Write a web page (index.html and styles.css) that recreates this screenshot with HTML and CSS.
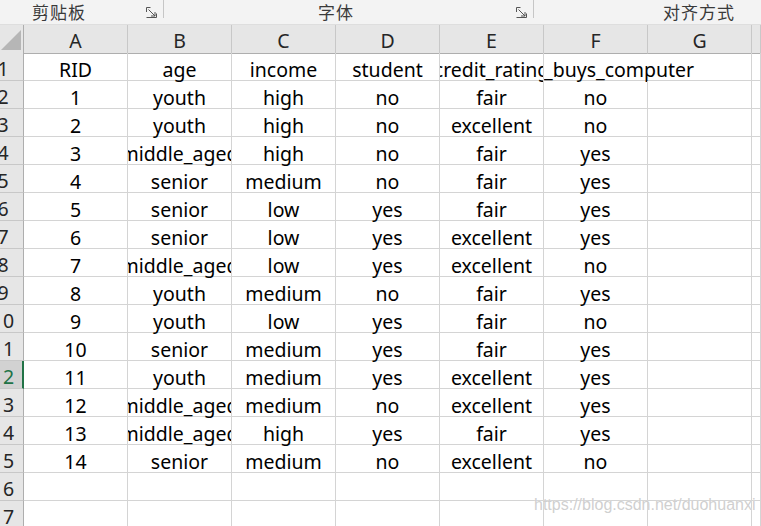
FILE: index.html
```html
<!DOCTYPE html>
<html>
<head>
<meta charset="utf-8">
<link rel="stylesheet" href="styles.css">
</head>
<body>
<div class="app">
  <div class="ribbon">
    <div class="group g1"><span class="glabel">剪贴板</span><svg class="launcher" viewBox="0 0 11 11"><path d="M0.5 5V0.5H4.5M0.5 10.5H10.5V6.5M2.5 2.5L9 9M9 5V9H5" fill="none" stroke="#555" stroke-width="1"/></svg></div>
    <div class="group g2"><span class="glabel">字体</span><svg class="launcher" viewBox="0 0 11 11"><path d="M0.5 5V0.5H4.5M0.5 10.5H10.5V6.5M2.5 2.5L9 9M9 5V9H5" fill="none" stroke="#555" stroke-width="1"/></svg></div>
    <div class="group g3"><span class="glabel">对齐方式</span></div>
  </div>
  <div class="sheet" id="sheet">
    <div class="corner"><div class="tri"></div></div>
    <div class="colhead">A</div><div class="colhead">B</div><div class="colhead">C</div><div class="colhead">D</div><div class="colhead">E</div><div class="colhead">F</div><div class="colhead">G</div><div class="colhead last"></div>
  </div>
  <div class="watermark">https://blog.csdn.net/duohuanxi</div>
</div>
<script src="app.js"></script>
</body>
</html>
```
FILE: app.js
```js
const rows = [
  ["RID","age","income","student","credit_rating","buys_computer"],
  ["1","youth","high","no","fair","no"],
  ["2","youth","high","no","excellent","no"],
  ["3","middle_aged","high","no","fair","yes"],
  ["4","senior","medium","no","fair","yes"],
  ["5","senior","low","yes","fair","yes"],
  ["6","senior","low","yes","excellent","yes"],
  ["7","middle_aged","low","yes","excellent","no"],
  ["8","youth","medium","no","fair","yes"],
  ["9","youth","low","yes","fair","no"],
  ["10","senior","medium","yes","fair","yes"],
  ["11","youth","medium","yes","excellent","yes"],
  ["12","middle_aged","medium","no","excellent","yes"],
  ["13","middle_aged","high","yes","fair","yes"],
  ["14","senior","medium","no","excellent","no"],
  [],[]
];
const sheet = document.getElementById("sheet");
rows.forEach((r, i) => {
  const n = i + 1;
  const rh = document.createElement("div");
  rh.className = "rowhead" + (n === 12 ? " active" : "");
  rh.innerHTML = '<span class="num">' + n + '</span>';
  sheet.appendChild(rh);
  if (i === 0) {
    for (let c = 0; c < 5; c++) {
      const d = document.createElement("div");
      d.className = "cell";
      d.innerHTML = '<span>' + r[c] + '</span>';
      sheet.appendChild(d);
    }
    const f = document.createElement("div");
    f.className = "cell span2";
    f.innerHTML = '<span>_' + r[5] + '</span>';
    sheet.appendChild(f);
  } else {
    for (let c = 0; c < 7; c++) {
      const d = document.createElement("div");
      d.className = "cell";
      d.innerHTML = '<span>' + (r[c] || "") + '</span>';
      sheet.appendChild(d);
    }
  }
  const e = document.createElement("div");
  e.className = "cell last";
  sheet.appendChild(e);
});
```
FILE: styles.css
```css
html, body {
  margin: 0;
  padding: 0;
  background: #fff;
}
.app {
  position: relative;
  width: 761px;
  height: 526px;
  overflow: hidden;
  font-family: "Noto Sans", "Noto Sans CJK SC", sans-serif;
}
.ribbon {
  display: flex;
  height: 24px;
  background: #f3f3f3;
  border-bottom: 1px solid #dedede;
}
.group {
  position: relative;
  display: flex;
  align-items: flex-start;
  height: 24px;
  box-sizing: border-box;
}
.g1 { width: 164px; border-right: 1px solid #c6c6c6; height: 18px; }
.g2 { width: 370px; border-right: 1px solid #c6c6c6; height: 18px; }
.g3 { flex: 1; }
.glabel {
  font-family: "Noto Sans CJK SC", sans-serif;
  font-size: 17px;
  line-height: 24px;
  color: #3a3a3a;
  letter-spacing: 1px;
}
.g1 .glabel { margin-left: 32px; }
.g2 .glabel { margin-left: 154px; }
.g3 .glabel { margin-left: 129px; }
.launcher {
  position: absolute;
  width: 11px;
  height: 11px;
  top: 7px;
}
.g1 .launcher { left: 146px; }
.g2 .launcher { left: 352px; }

.sheet {
  display: grid;
  grid-template-columns: 24px repeat(7, 104px) 1fr;
  grid-auto-rows: 28px;
}
.corner, .colhead {
  background: #e6e6e6;
  border-right: 1px solid #c8c8c8;
  border-bottom: 1px solid #aeaeae;
  box-sizing: border-box;
  height: 29px;
}
.corner {
  position: relative;
  border-right: 1px solid #aeaeae;
}
.tri {
  position: absolute;
  right: 2px;
  bottom: 3px;
  width: 0;
  height: 0;
  border-left: 20px solid transparent;
  border-bottom: 20px solid #b6b6b6;
}
.colhead {
  display: flex;
  align-items: center;
  justify-content: center;
  font-size: 19.5px;
  color: #262626;
  padding-top: 3px;
}
.sheet > .corner, .sheet > .colhead { margin-bottom: -1px; }
.rowhead {
  background: #e6e6e6;
  border-right: 1px solid #aeaeae;
  border-bottom: 1px solid #c8c8c8;
  box-sizing: border-box;
  overflow: hidden;
  position: relative;
  font-size: 19.5px;
  color: #262626;
}
.rowhead .num {
  position: absolute;
  left: -17px;
  width: 40px;
  text-align: center;
  top: 6px;
  line-height: 20px;
}
.rowhead.active {
  background: #d2d2d2;
  color: #217346;
  border-right: 2px solid #217346;
}
.cell {
  border-right: 1px solid #d4d4d4;
  border-bottom: 1px solid #d4d4d4;
  box-sizing: border-box;
  overflow-x: clip;
  overflow-y: visible;
  display: flex;
  justify-content: center;
  align-items: flex-start;
  white-space: nowrap;
  font-size: 19.5px;
  color: #000;
  line-height: 20px;
  padding-top: 7px;
}
.cell.span2 {
  grid-column: span 2;
  justify-content: flex-start;
  padding-left: 0;
}
.watermark {
  position: absolute;
  left: 534px;
  top: 496px;
  font-family: "Liberation Sans", Arial, sans-serif;
  font-size: 16px;
  color: rgba(195, 195, 195, 0.8);
  text-shadow: 0 0 1px rgba(255,255,255,0.9);
  white-space: nowrap;
}
```
